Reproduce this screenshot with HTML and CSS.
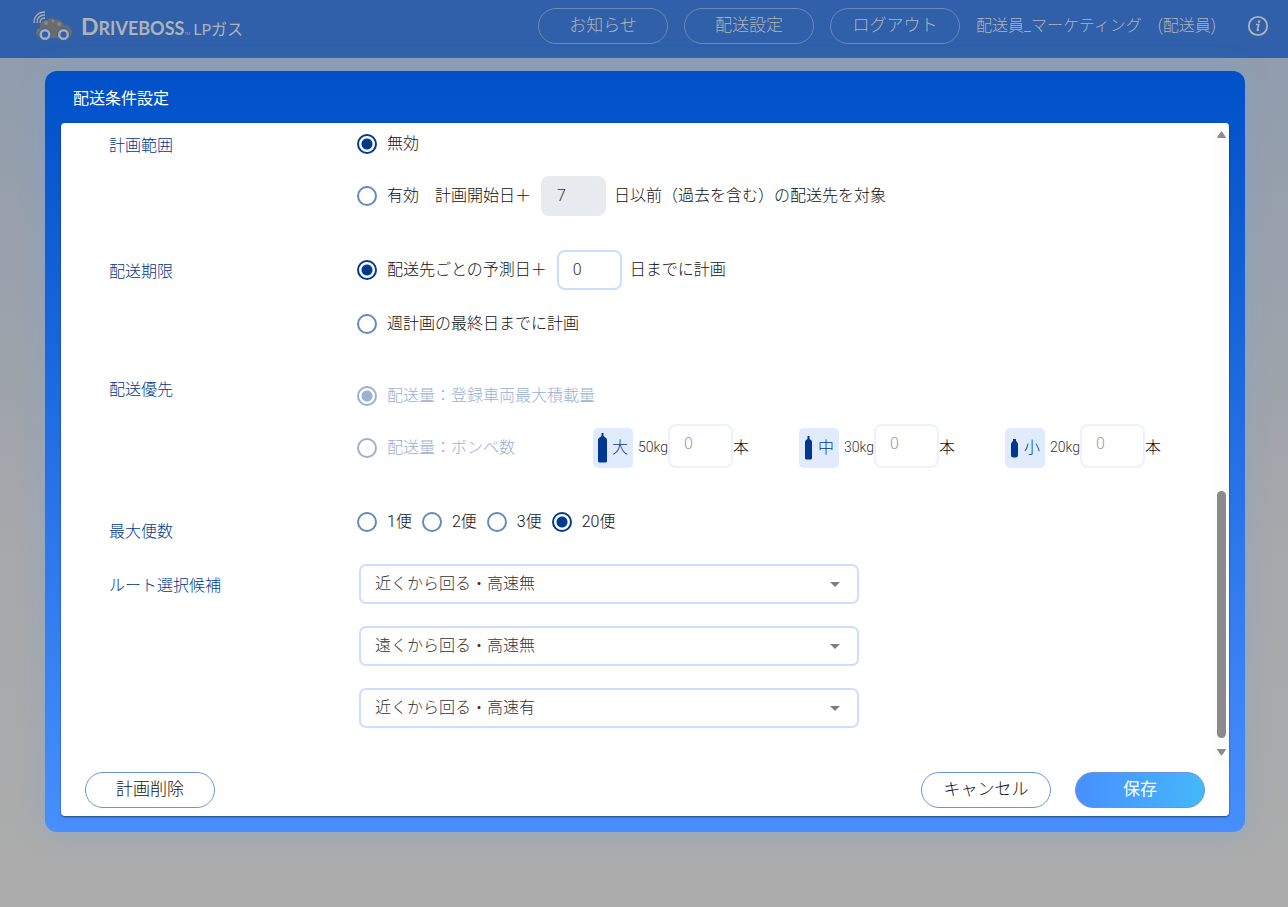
FILE: index.html
```
<!DOCTYPE html>
<html lang="ja">
<head>
<meta charset="utf-8">
<meta name="viewport" content="width=device-width, initial-scale=1">
<title>配送条件設定</title>
<link rel="stylesheet" href="styles.css">
</head>
<body>
<header class="topbar">
  <div class="logo">
    <svg class="logo-car" width="40" height="30" viewBox="0 0 40 30" aria-hidden="true">
      <g fill="none" stroke="#a5adb5" stroke-width="1.3">
        <path d="M1 12C1 5.500 5.500 1 12 1"/><path d="M4 12C4 7 7 4 12 4"/><path d="M7 12C7 9 9 7 12 7"/>
      </g>
      <path fill="#696b6f" d="M3 21c0-2.500 1.500-4 4-4.500C7 11 10 9 14 9c2-2.500 6-3 8 0 4-1 8 1 9 5 4 0 7.500 3 8 6 .3 4-1.500 7-5 7H8c-3 0-5-3-5-6z"/>
      <g fill="#85878a"><circle cx="13" cy="12" r="2"/><circle cx="20" cy="10" r="1.500"/><circle cx="26" cy="13" r="2"/><circle cx="6" cy="20" r="1"/></g>
      <g fill="none" stroke="#2f60a9" stroke-width="1"><circle cx="12" cy="23.500" r="6"/><circle cx="30.500" cy="23.500" r="6"/></g>
      <g fill="#2f60a9" stroke="#a5adb5" stroke-width="2.400"><circle cx="12" cy="23.500" r="4.300"/><circle cx="30.500" cy="23.500" r="4.300"/></g>
    </svg>
    <span class="logo-name"><span class="logo-cap">D</span>RIVEBOSS</span><span class="logo-tm">TM</span><span class="logo-sub">LPガス</span>
  </div>
  <nav class="nav">
    <button class="nav-btn" type="button">お知らせ</button>
    <button class="nav-btn" type="button">配送設定</button>
    <button class="nav-btn" type="button">ログアウト</button>
    <span class="user">配送員_マーケティング　(配送員)</span>
    <button class="info" type="button" aria-label="情報">
      <svg width="22" height="22" viewBox="0 0 22 22" aria-hidden="true">
        <circle cx="11" cy="11" r="9.200" fill="none" stroke="currentColor" stroke-width="1.800"/>
        <circle cx="12" cy="6.600" r="1.300" fill="currentColor"/>
        <path d="M9 9.500h2.800l-1.500 5.500q-.2 1 1.700-.3" fill="none" stroke="currentColor" stroke-width="1.600"/>
      </svg>
    </button>
  </nav>
</header>

<main class="dialog" role="dialog" aria-labelledby="dialog-title">
  <h1 class="dialog-title" id="dialog-title">配送条件設定</h1>
  <form class="panel">
    <div class="viewport">
      <div class="sections">
        <section class="section range">
          <h2 class="label">計画範囲</h2>
          <div class="lines">
            <div class="line"><label class="choice"><input class="radio" type="radio" name="range" checked>無効</label></div>
            <div class="line"><label class="choice"><input class="radio" type="radio" name="range">有効　計画開始日＋</label><input class="num" type="text" value="7" aria-label="計画開始日からの日数" disabled><span>日以前（過去を含む）の配送先を対象</span></div>
          </div>
        </section>
        <section class="section limit">
          <h2 class="label">配送期限</h2>
          <div class="lines">
            <div class="line"><label class="choice"><input class="radio" type="radio" name="limit" checked>配送先ごとの予測日＋</label><input class="num" type="text" value="0" aria-label="予測日からの日数"><span>日までに計画</span></div>
            <div class="line"><label class="choice"><input class="radio" type="radio" name="limit">週計画の最終日までに計画</label></div>
          </div>
        </section>
        <section class="section priority">
          <h2 class="label">配送優先</h2>
          <div class="lines">
            <div class="line"><label class="choice off"><input class="radio" type="radio" name="priority" checked disabled>配送量：登録車両最大積載量</label></div>
            <div class="line cylinders">
              <label class="choice off"><input class="radio" type="radio" name="priority" disabled>配送量：ボンベ数</label>
              <div class="cylinder">
                <span class="badge"><svg width="9" height="30" viewBox="0 0 9 30" aria-hidden="true"><path fill="#00388f" d="M3.500 0h2v3L8 5q1 .5 1 2v21q0 1.500-1.500 1.500h-6Q0 29.500 0 28V7q0-1.500 1-2l2.500-2z"/></svg>大</span>
                <label class="kg" for="n50">50kg</label><input class="num count" id="n50" type="text" value="0" disabled><span class="unit">本</span>
              </div>
              <div class="cylinder">
                <span class="badge"><svg width="9" height="24" viewBox="0 0 9 24" aria-hidden="true"><path fill="#00388f" d="M3.500 0h2v3Q8 4 8 6v16q0 1.500-1.500 1.500h-4Q1 23.500 1 22V6q0-2 2.500-3z"/></svg>中</span>
                <label class="kg" for="n30">30kg</label><input class="num count" id="n30" type="text" value="0" disabled><span class="unit">本</span>
              </div>
              <div class="cylinder">
                <span class="badge"><svg width="9" height="19" viewBox="0 0 9 19" aria-hidden="true"><path fill="#00388f" d="M3 0h3v2Q8 3.500 8 5v11q0 2.500-2.500 2.500h-2Q1 18.500 1 16V5q0-1.500 2-3z"/></svg>小</span>
                <label class="kg" for="n20">20kg</label><input class="num count" id="n20" type="text" value="0" disabled><span class="unit">本</span>
              </div>
            </div>
          </div>
        </section>
        <section class="section trips">
          <h2 class="label">最大便数</h2>
          <div class="lines">
            <div class="line">
              <label class="choice"><input class="radio" type="radio" name="trips">1便</label>
              <label class="choice"><input class="radio" type="radio" name="trips">2便</label>
              <label class="choice"><input class="radio" type="radio" name="trips">3便</label>
              <label class="choice"><input class="radio" type="radio" name="trips" checked>20便</label>
            </div>
          </div>
        </section>
        <section class="section routes">
          <h2 class="label" id="route-label">ルート選択候補</h2>
          <div class="lines">
            <div class="pick"><select class="select" aria-labelledby="route-label"><option>近くから回る・高速無</option></select><svg class="caret" width="10" height="5" viewBox="0 0 10 5" aria-hidden="true"><path fill="#7d7d7d" d="M0 0h10L5 5z"/></svg></div>
            <div class="pick"><select class="select" aria-labelledby="route-label"><option>遠くから回る・高速無</option></select><svg class="caret" width="10" height="5" viewBox="0 0 10 5" aria-hidden="true"><path fill="#7d7d7d" d="M0 0h10L5 5z"/></svg></div>
            <div class="pick"><select class="select" aria-labelledby="route-label"><option>近くから回る・高速有</option></select><svg class="caret" width="10" height="5" viewBox="0 0 10 5" aria-hidden="true"><path fill="#7d7d7d" d="M0 0h10L5 5z"/></svg></div>
          </div>
        </section>
      </div>
      <div class="scrollbar" aria-hidden="true">
        <svg width="9" height="7" viewBox="0 0 9 7"><path fill="#8b8b8b" stroke="#8b8b8b" stroke-linejoin="round" d="M4.500.7 8.500 6.500h-8z"/></svg>
        <div class="track"><div class="thumb"></div></div>
        <svg width="9" height="7" viewBox="0 0 9 7"><path fill="#8b8b8b" stroke="#8b8b8b" stroke-linejoin="round" d="M4.500 6.300 8.500.5h-8z"/></svg>
      </div>
    </div>
    <footer class="actions">
      <button class="btn" type="button">計画削除</button>
      <div class="actions-end">
        <button class="btn" type="button">キャンセル</button>
        <button class="btn primary" type="submit">保存</button>
      </div>
    </footer>
  </form>
</main>
</body>
</html>
```
FILE: styles.css
```
* { box-sizing: border-box; }

body {
  margin: 0;
  min-height: 100vh;
  background: linear-gradient(#8e9bad 0, #a6a8ab 60%, #acacac 100%);
  color: #111;
  font: 300 16px/24px Roboto, "Noto Sans CJK JP", sans-serif;
}

button, input, select { font: inherit; color: inherit; margin: 0; }

.topbar {
  display: flex;
  align-items: center;
  justify-content: space-between;
  height: 58px;
  padding: 0 19px 6px 33px;
  background: #2f60a9;
  color: #b0b3b7;
}

.logo { display: flex; align-items: baseline; padding-top: 10px; white-space: nowrap; }
.logo-car { align-self: center; margin-right: 8px; margin-bottom: 10px; }
.logo-name { font: 700 18px/30px Lato, sans-serif; }
.logo-cap { font-size: 23px; }
.logo-tm { font-size: 4px; margin-right: 3px; }
.logo-sub { font: 400 16px/30px Lato, "Noto Sans CJK JP", sans-serif; }

.nav { display: flex; align-items: center; gap: 16px; white-space: nowrap; }
.nav-btn {
  width: 130px;
  height: 36px;
  padding: 0 0 2px;
  border: 1px solid #6b8ab8;
  border-radius: 18px;
  background: none;
  font-size: 17px;
}
.info { display: flex; margin-left: 15px; padding: 0; border: 0; background: none; }

.dialog {
  margin: 13px 43px 0 45px;
  padding: 0 16px 16px;
  border-radius: 12px;
  background: linear-gradient(#0050c8, #478fff);
  box-shadow: 0 0 24px rgba(110, 165, 235, 0.4);
}
.dialog-title {
  margin: 0;
  padding: 16px 12px 12px;
  color: #fff;
  font-size: 16px;
  line-height: 24px;
  font-weight: 400;
}

.panel {
  border-radius: 4px;
  background: #fff;
  box-shadow: 0 1px 2px rgba(0, 0, 0, 0.5);
}
.viewport { display: flex; }
.sections { flex: 1; padding: 1px 0 36px 48px; }

.section { display: flex; margin-bottom: 32px; }
.label {
  flex: 0 0 248px;
  margin: 10px 0 0;
  color: #00378f;
  font-size: 16px;
  font-weight: 300;
}
.lines { display: flex; flex-direction: column; flex: 1; gap: 12px; }
.line { display: flex; align-items: center; gap: 8px; min-height: 40px; white-space: nowrap; }

.range { margin-bottom: 34px; }
.limit .lines { gap: 14px; }
.priority .lines { gap: 8px; }
.priority .label { margin-top: 2px; }
.priority { margin-bottom: 34px; }
.trips { margin-bottom: 22px; }
.trips .label { margin-top: 18px; margin-bottom: -2px; }
.routes { margin-bottom: 0; }
.routes .lines { gap: 22px; padding-left: 2px; }

.choice { display: flex; align-items: center; gap: 10px; line-height: 22px; padding-right: 2px; }
.off { color: #99b1d4; }

.radio {
  appearance: none;
  width: 20px;
  height: 20px;
  border: 2px solid #6689bc;
  border-radius: 50%;
  background: #fff;
}
.radio:checked {
  border-color: #003b8f;
  background: radial-gradient(circle, #003b8f 5px, #fff 6px);
}
.radio:disabled { border-color: #99b1d4; }
.radio:checked:disabled { background: radial-gradient(circle, #99b1d4 5px, #fff 6px); }

.num {
  width: 65px;
  height: 40px;
  padding: 0 14px 2px;
  border: 2px solid #ccdeff;
  border-radius: 8px;
  background: #fff;
  color: #333;
}
.num:disabled { border-color: #e7ebf0; background: #e7ebf0; }

.cylinders { display: grid; grid-template-columns: 228px repeat(3, minmax(0, 198px)); align-items: end; }
.cylinders .choice { height: 40px; }
.cylinder { display: flex; align-items: flex-end; }
.badge {
  display: flex;
  align-items: center;
  justify-content: center;
  gap: 5px;
  width: 40px;
  height: 40px;
  border-radius: 5px;
  background: #e1ebff;
  color: #003b8f;
}
.kg { margin-left: 5px; color: #333; font-size: 14px; font-weight: 350; line-height: 38px; padding-bottom: 2px; }
.unit { line-height: 40px; }
.count { height: 44px; padding-bottom: 6px; }
.count:disabled { border-color: #ebf1ff; background: #fff; color: #999; }

.pick { display: grid; width: 500px; max-width: 100%; align-items: center; }
.select, .caret { grid-area: 1 / 1; }
.select {
  appearance: none;
  height: 40px;
  padding: 0 40px 0 14px;
  border: 2px solid #ccdeff;
  border-radius: 7px;
  background: #fff;
  color: #333;
}
.caret { justify-self: end; margin-right: 19px; pointer-events: none; }

.scrollbar {
  display: flex;
  flex-direction: column;
  align-items: center;
  width: 15px;
  padding: 8px 0;
  border-top-right-radius: 4px;
  background: #fcfcfc;
}
.track { display: flex; flex: 1; flex-direction: column; justify-content: flex-end; padding: 11px 0; }
.thumb { width: 9px; height: 42%; border-radius: 5px; background: #8b8b8b; }

.actions { display: flex; justify-content: space-between; padding: 8px 24px; }
.actions-end { display: flex; gap: 24px; }
.btn {
  width: 130px;
  height: 36px;
  padding: 0 0 2px;
  border: 1px solid #6b93dc;
  border-radius: 18px;
  background: #fff;
  font-size: 17px;
}
.primary {
  background: linear-gradient(90deg, #478fff, #45b8fa) border-box;
  color: #fff;
  font-weight: 400;
}
```
